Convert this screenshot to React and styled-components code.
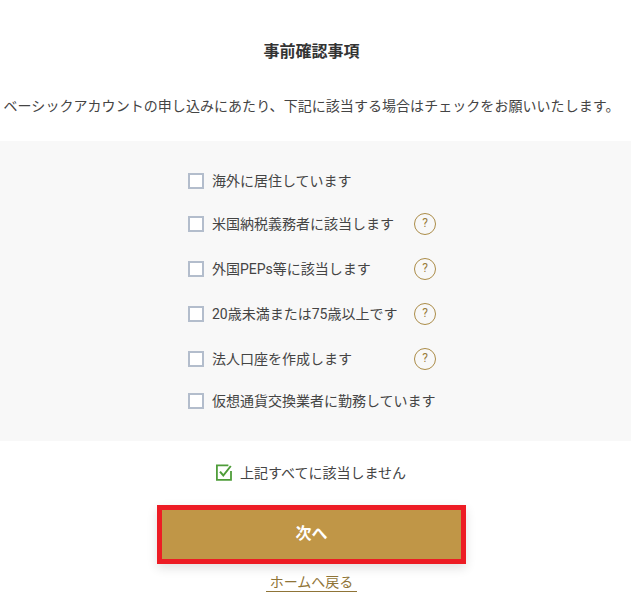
import React from "react";
import styled, { createGlobalStyle } from "styled-components";

const GlobalStyle = createGlobalStyle`
  html, body {
    margin: 0;
    padding: 0;
    background: #fff;
    font-family: Roboto, "Noto Sans CJK JP", sans-serif;
    color: #444;
  }
`;

const Page = styled.div`
  width: 631px;
  height: 602px;
  box-sizing: border-box;
  padding-right: 8px;
  overflow: hidden;
  display: flex;
  flex-direction: column;
  align-items: center;
`;

const Title = styled.h1`
  margin: 41px 0 0;
  height: 21px;
  line-height: 21px;
  font-size: 16px;
  font-weight: 700;
  color: #333;
  text-align: center;
`;

const Lead = styled.p`
  margin: 33px -10px 0;
  height: 22px;
  line-height: 22px;
  font-size: 14px;
  letter-spacing: 0.05px;
  white-space: nowrap;
  color: #444;
`;

const Panel = styled.div`
  margin: 24px -8px 0 0;
  align-self: stretch;
  height: 300px;
  box-sizing: border-box;
  padding: 20px 8px 20px 0;
  background: #f8f8f8;
  display: flex;
  flex-direction: column;
  align-items: center;
`;

const List = styled.div`
  width: 248px;
  margin-left: 1px;
`;

const Row = styled.label`
  display: flex;
  align-items: center;
  height: ${(p) => (p.$tall ? 45 : 40)}px;
`;

const Box = styled.span`
  flex: none;
  width: 16px;
  height: 16px;
  box-sizing: border-box;
  border: 2px solid #b3bdcc;
  background: #fff;
  margin-right: 8px;
`;

const Label = styled.span`
  font-size: 14px;
  position: relative;
  top: -1px;
  white-space: nowrap;
`;

const Help = styled.span`
  flex: none;
  margin-left: auto;
  width: 22px;
  height: 22px;
  box-sizing: border-box;
  border: 1.5px solid #ab8c48;
  border-radius: 50%;
  color: #9a7d3c;
  font-size: 12px;
  line-height: 19px;
  text-align: center;
`;

const NoneRow = styled.label`
  margin-top: 21px;
  height: 20px;
  display: flex;
  align-items: center;
  gap: 7px;
  font-size: 14px;
`;

const CheckIcon = styled.svg`
  display: block;
  width: 18px;
  height: 18px;
  margin-left: -2px;
`;

const NextButton = styled.button`
  margin-top: 23px;
  width: 309px;
  height: 59px;
  box-sizing: border-box;
  border: 5px solid #ed1c24;
  padding: 0 0 5px;
  background: #c09647;
  color: #fff;
  font-family: inherit;
  font-size: 16px;
  font-weight: 700;
  box-shadow: 0 4px 10px rgba(0, 0, 0, 0.12);
`;

const BackLink = styled.a`
  margin-top: 10px;
  padding: 0 4px;
  font-size: 14px;
  line-height: 17px;
  color: #8f7437;
  border-bottom: 1px solid #8f7437;
`;

const rows = [
  { text: "海外に居住しています" },
  { text: "米国納税義務者に該当します", help: true },
  { text: "外国PEPs等に該当します", help: true },
  { text: "20歳未満または75歳以上です", help: true },
  { text: "法人口座を作成します", help: true },
  { text: "仮想通貨交換業者に勤務しています" },
];

const App = () => {
  return (
    <Page>
      <GlobalStyle />
      <Title>事前確認事項</Title>
      <Lead>ベーシックアカウントの申し込みにあたり、下記に該当する場合はチェックをお願いいたします。</Lead>
      <Panel>
        <List>
          {rows.map((row) => (
            <Row key={row.text} $tall={row.help}>
              <Box />
              <Label>{row.text}</Label>
              {row.help && <Help>?</Help>}
            </Row>
          ))}
        </List>
      </Panel>
      <NoneRow>
        <CheckIcon viewBox="0 0 18 18" fill="none">
          <path d="M16 8v8.8H1.9V2.4h11.5" stroke="#4f9d3a" strokeWidth="1.8" />
          <path d="M5 8.6l3.3 3.9L15.8 3" stroke="#4f9d3a" strokeWidth="2" />
        </CheckIcon>
        上記すべてに該当しません
      </NoneRow>
      <NextButton>次へ</NextButton>
      <BackLink>ホームへ戻る</BackLink>
    </Page>
  );
};

export default App;
